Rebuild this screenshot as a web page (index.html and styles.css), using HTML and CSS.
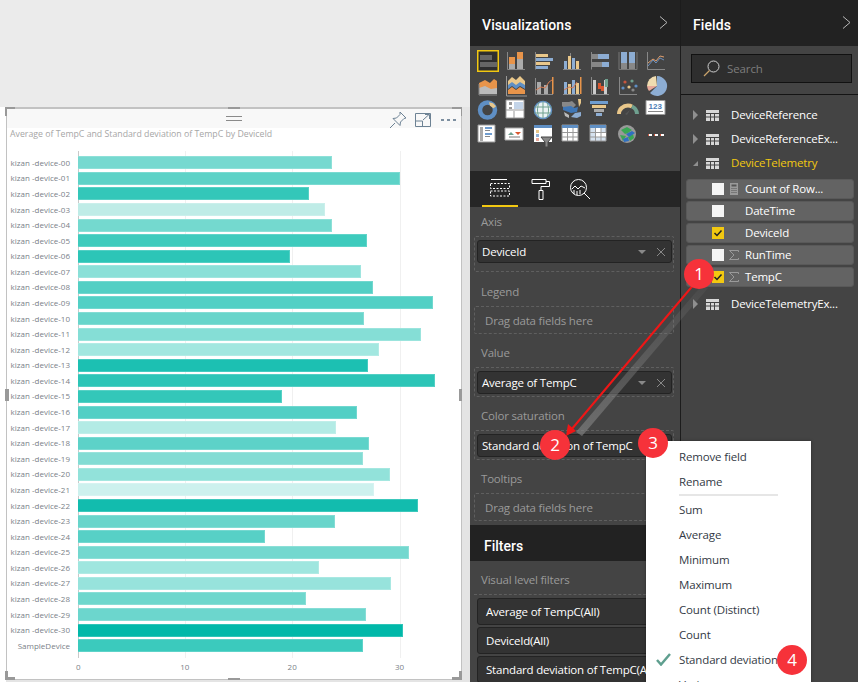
FILE: index.html
```html
<!DOCTYPE html>
<html lang="en">
<head>
<meta charset="utf-8">
<title>Power BI report</title>
<link rel="stylesheet" href="styles.css">
</head>
<body>
<div class="app">
  <main class="canvas">
    <section class="visual">
      <i class="handle h-tl"></i><i class="handle h-tm"></i><i class="handle h-tr"></i>
      <i class="handle h-ml"></i><i class="handle h-mr"></i>
      <i class="handle h-bl"></i><i class="handle h-bm"></i><i class="handle h-br"></i>
      <div class="vhead">
        <svg class="grip" width="16" height="5" viewBox="0 0 16 5"><path d="M0 .5h16M0 4.500h16" stroke="#8a8a8a"/></svg>
        <div class="vtools">
          <svg width="18" height="18" viewBox="0 0 18 18" fill="none" stroke="#6d8294"><path d="M11 1l6 6-2 .5-3.500 3.500-.5 3.500-7-7 3.500-.5L11 3.500zM6 12l-5 5"/></svg>
          <svg width="16" height="14" viewBox="0 0 16 14" fill="none" stroke="#6d8294"><path d="M.5.500h15v13H.5zM.5 8h7v5.500M8 7l6-5.500M10 1.500h4.500V6"/></svg>
          <svg class="dots" width="16" height="2" viewBox="0 0 16 2"><path d="M0 0h3v2H0zM6 0h3v2H6zM12 0h3v2h-3z" fill="#7d8fa0"/></svg>
        </div>
      </div>
      <h2 class="vtitle">Average of TempC and Standard deviation of TempC by DeviceId</h2>
      <div class="plot">
        <i class="gridline g0"></i><i class="gridline g1"></i><i class="gridline g2"></i><i class="gridline g3"></i>
        <div class="row"><span class="cat">kizan -device-00</span><span class="bar" style="width:254px;background:#76d9d0"></span></div>
        <div class="row"><span class="cat">kizan -device-01</span><span class="bar" style="width:322px;background:#5dd2c7"></span></div>
        <div class="row"><span class="cat">kizan -device-02</span><span class="bar" style="width:231px;background:#33c7b9"></span></div>
        <div class="row"><span class="cat">kizan -device-03</span><span class="bar" style="width:247px;background:#bfece7"></span></div>
        <div class="row"><span class="cat">kizan -device-04</span><span class="bar" style="width:254px;background:#74d9cf"></span></div>
        <div class="row"><span class="cat">kizan -device-05</span><span class="bar" style="width:289px;background:#3ecbbd"></span></div>
        <div class="row"><span class="cat">kizan -device-06</span><span class="bar" style="width:212px;background:#2cc5b7"></span></div>
        <div class="row"><span class="cat">kizan -device-07</span><span class="bar" style="width:283px;background:#8ae0d8"></span></div>
        <div class="row"><span class="cat">kizan -device-08</span><span class="bar" style="width:295px;background:#53cfc4"></span></div>
        <div class="row"><span class="cat">kizan -device-09</span><span class="bar" style="width:355px;background:#52d0c5"></span></div>
        <div class="row"><span class="cat">kizan -device-10</span><span class="bar" style="width:286px;background:#68d5cb"></span></div>
        <div class="row"><span class="cat">kizan -device-11</span><span class="bar" style="width:343px;background:#85ded6"></span></div>
        <div class="row"><span class="cat">kizan -device-12</span><span class="bar" style="width:301px;background:#a2e7e0"></span></div>
        <div class="row"><span class="cat">kizan -device-13</span><span class="bar" style="width:290px;background:#1cc0b2"></span></div>
        <div class="row"><span class="cat">kizan -device-14</span><span class="bar" style="width:357px;background:#2cc5b7"></span></div>
        <div class="row"><span class="cat">kizan -device-15</span><span class="bar" style="width:204px;background:#33c7b9"></span></div>
        <div class="row"><span class="cat">kizan -device-16</span><span class="bar" style="width:279px;background:#52cfc5"></span></div>
        <div class="row"><span class="cat">kizan -device-17</span><span class="bar" style="width:258px;background:#b3ebe5"></span></div>
        <div class="row"><span class="cat">kizan -device-18</span><span class="bar" style="width:291px;background:#5dd2c8"></span></div>
        <div class="row"><span class="cat">kizan -device-19</span><span class="bar" style="width:285px;background:#82dcd4"></span></div>
        <div class="row"><span class="cat">kizan -device-20</span><span class="bar" style="width:312px;background:#92e2da"></span></div>
        <div class="row"><span class="cat">kizan -device-21</span><span class="bar" style="width:296px;background:#cdf1ee"></span></div>
        <div class="row"><span class="cat">kizan -device-22</span><span class="bar" style="width:340px;background:#12bcae"></span></div>
        <div class="row"><span class="cat">kizan -device-23</span><span class="bar" style="width:257px;background:#68d5cb"></span></div>
        <div class="row"><span class="cat">kizan -device-24</span><span class="bar" style="width:187px;background:#57d0c6"></span></div>
        <div class="row"><span class="cat">kizan -device-25</span><span class="bar" style="width:331px;background:#73d8cf"></span></div>
        <div class="row"><span class="cat">kizan -device-26</span><span class="bar" style="width:241px;background:#9fe6df"></span></div>
        <div class="row"><span class="cat">kizan -device-27</span><span class="bar" style="width:313px;background:#97e3dc"></span></div>
        <div class="row"><span class="cat">kizan -device-28</span><span class="bar" style="width:228px;background:#6ed7cd"></span></div>
        <div class="row"><span class="cat">kizan -device-29</span><span class="bar" style="width:288px;background:#6cd6cd"></span></div>
        <div class="row"><span class="cat">kizan -device-30</span><span class="bar" style="width:325px;background:#00b8a9"></span></div>
        <div class="row"><span class="cat">SampleDevice</span><span class="bar" style="width:285px;background:#3bcabd"></span></div>
      </div>
      <div class="axis"><span>0</span><span>10</span><span>20</span><span>30</span></div>
    </section>
  </main>

  <aside class="viz">
    <header class="phead"><h1>Visualizations</h1><svg class="chev" width="9" height="13" viewBox="0 0 9 13"><path d="M1 .5l7 6-7 6" fill="none" stroke="#b8b8b8"/></svg></header>
    <div class="gallery">
      <svg class="vi" viewBox="0 0 24 24"><rect x=".75" y=".75" width="20.500" height="20.500" fill="#2e2e2e" stroke="#f2c811" stroke-width="1.500"/><path d="M3 5h12v5H3z" fill="#666"/><path d="M3 12h17v5H3z" fill="#666"/></svg>
      <svg class="vi" viewBox="0 0 24 24"><path d="M2.500 2v17.500H20" fill="none" stroke="#888"/><path d="M4 14h6v5H4zM12 9h6v10h-6z" fill="#aaa"/><path d="M4 7h6v7H4zM12 2h6v7h-6z" fill="#e8944a"/></svg>
      <svg class="vi" viewBox="0 0 24 24"><path d="M2.500 2v17.500" fill="none" stroke="#888"/><path d="M3 4h12v3H3zM3 12h14v3H3z" fill="#e9c78a"/><path d="M3 8h17v3H3zM3 16h12v3H3z" fill="#8dadd3"/></svg>
      <svg class="vi" viewBox="0 0 24 24"><path d="M2 19.500h18" stroke="#888"/><path d="M3 11h3v8H3zM11 8h3v11h-3z" fill="#8dadd3"/><path d="M7 6h3v13H7zM15 11h3v8h-3z" fill="#e9c78a"/><path d="M9 3h1v3H9z" fill="#888"/></svg>
      <svg class="vi" viewBox="0 0 24 24"><path d="M2.500 2v17.500" stroke="#888"/><path d="M3 4h6v5H3zM3 12h10v5H3z" fill="#888"/><path d="M9 4h11v5H9zM13 12h7v5h-7z" fill="#8dadd3"/></svg>
      <svg class="vi" viewBox="0 0 24 24"><path d="M2 2v17.500h18V2" fill="none" stroke="#777"/><path d="M4 2h6v11H4zM12 2h6v11h-6z" fill="#8dadd3"/><path d="M4 13h6v6H4zM12 13h6v6h-6z" fill="#888"/></svg>
      <svg class="vi" viewBox="0 0 24 24"><path d="M2.500 2v17.500H20" fill="none" stroke="#888"/><path d="M3 16l5-6 3 3 4-5 4 2" fill="none" stroke="#6a8fbd"/><path d="M3 13l5-4 3 2 4-5 4 1" fill="none" stroke="#e0a070"/></svg>

      <svg class="vi" viewBox="0 0 24 24"><path d="M2 8l6-3 5 3 4-4 3 2v13H2z" fill="#e8944a"/><path d="M2 13l6-2 6 3 6-1v6H2z" fill="#bbb"/><path d="M2 9v11h18" fill="none" stroke="#888"/></svg>
      <svg class="vi" viewBox="0 0 24 24"><path d="M3 6l4-4 4 3 4-4 5 5v5l-5-3-4 3-4-3-4 3z" fill="#e9c78a"/><path d="M3 10l4-3 4 3 4-3 5 3v4l-5-3-4 3-4-3-4 3z" fill="#5f8fc4"/><path d="M3 15l4-3 4 3 4-3 5 3v4H3z" fill="#e8944a"/><path d="M1.500 1v20H22" fill="none" stroke="#999"/></svg>
      <svg class="vi" viewBox="0 0 24 24"><path d="M2.500 3v16.500H20" fill="none" stroke="#888"/><path d="M4 7h4v12H4zM11 10h4v9h-4z" fill="#aaa"/><path d="M3 15l5-3 4 1 4-6 3-2" fill="none" stroke="#d77b52"/><path d="M19 2h1.500v17H19z" fill="#e8944a"/></svg>
      <svg class="vi" viewBox="0 0 24 24"><path d="M2 19.500h17" stroke="#888"/><path d="M3 7h3v12H3zM11 5h3v14h-3z" fill="#8dadd3"/><path d="M7 9h3v10H7zM15 8h3v11h-3z" fill="#e9c78a"/><path d="M3 15l5-3 4 1 4-6" fill="none" stroke="#d77b52"/><path d="M19 2h1.500v17H19z" fill="#e8944a"/></svg>
      <svg class="vi" viewBox="0 0 24 24"><path d="M2.500 2v17.500H20" fill="none" stroke="#888"/><path d="M4 5h3v14H4zM15 5h3v14h-3z" fill="#ccc"/><path d="M9 8h3v6H9zM12 11h3v5h-3z" fill="#d8572f"/><path d="M16 4h3v8h-3z" fill="#6fa08f"/></svg>
      <svg class="vi" viewBox="0 0 24 24"><path d="M2.500 2v17.500H20" fill="none" stroke="#888"/><circle cx="6" cy="13" r="1.600" fill="#5f8fc4"/><circle cx="8" cy="7" r="1.600" fill="#c8553d"/><circle cx="12" cy="12" r="1.600" fill="#e9c78a"/><circle cx="15" cy="6" r="1.600" fill="#6fa08f"/><circle cx="16" cy="15" r="1.600" fill="#888"/><circle cx="19" cy="11" r="1.600" fill="#5f8fc4"/></svg>
      <svg class="vi" viewBox="0 0 24 24"><path d="M12 11V1a10 10 0 1 1-7 17z" fill="#8dadd3"/><path d="M12 11L4 16a10 10 0 0 1-2-5z" fill="#e8a99a"/><path d="M12 11H2a10 10 0 0 1 9-10z" fill="#f0dcb0"/></svg>

      <svg class="vi" viewBox="0 0 24 24"><circle cx="10.500" cy="11" r="7.500" fill="none" stroke="#5f8fc4" stroke-width="4.500"/><path d="M12 3.300l4 1 3 3-2.500 2-3.500-2.500z" fill="#e9c78a"/></svg>
      <svg class="vi" viewBox="0 0 24 24"><path d="M1 1h18v18H1z" fill="#fff" stroke="#999"/><path d="M4 3h3v3H4zM4 8h3v2H4z" fill="#999"/><path d="M9 3h9v7H9z" fill="#c3d4e8"/><path d="M1 11h18" stroke="#999"/><path d="M9 12v7" stroke="#999"/></svg>
      <svg class="vi" viewBox="0 0 24 24"><circle cx="10" cy="11" r="8.500" fill="#eaf2f4" stroke="#5f8fc4" stroke-width="1.500"/><path d="M1.500 8h17M1.500 14h17M10 2.500v17M6 3.500c-2 5-2 10 0 15M14 3.500c2 5 2 10 0 15" fill="none" stroke="#6fa08f"/></svg>
      <svg class="vi" viewBox="0 0 24 24"><path d="M1 3h7l3-1 4 4-3 3-8 1L1 7z" fill="#888"/><path d="M2 8l8-1 3 2 4-1-1 5-6 1-8-3z" fill="#3f76b5"/><path d="M14 14l6-1 0 4-4 2-6-1z" fill="#8dadd3"/><path d="M3 13l5 3 0 3-4-2z" fill="#bbb"/><path d="M17 0h3v4l-2 4z" fill="#e9c78a"/></svg>
      <svg class="vi" viewBox="0 0 24 24"><path d="M1 2h18v3H1z" fill="#6f9dd0"/><path d="M3 6h14v3H3z" fill="#e9c78a"/><path d="M5 10h10v3H5z" fill="#aaa"/><path d="M7 14h6v3H7z" fill="#8dadd3"/></svg>
      <svg class="vi" viewBox="0 0 24 24"><path d="M2 15a9 8.500 0 0 1 9-8.500" fill="none" stroke="#e9c78a" stroke-width="4"/><path d="M11 6.500a9 8.500 0 0 1 4 1" fill="none" stroke="#e9c78a" stroke-width="4"/><path d="M15 7.500a9 8.500 0 0 1 5 7.500" fill="none" stroke="#6fa08f" stroke-width="4"/><path d="M8 15l5-4-3 5z" fill="#555"/></svg>
      <svg class="vi" viewBox="0 0 24 24"><path d="M1 1.500h19v14H1z" fill="#fff" stroke="#999"/><text x="3.500" y="10" class="vi-num">123</text><path d="M3 12.500h15" stroke="#888"/></svg>

      <svg class="vi" viewBox="0 0 24 24"><path d="M1 1h17v17H1z" fill="#fff" stroke="#999"/><path d="M3 3h3v14H3z" fill="#aaa"/><path d="M8 3h7v2H8zM8 9h7v2H8z" fill="#6f9dd0"/><path d="M8 6h5v1H8zM8 12h5v1H8z" fill="#888"/></svg>
      <svg class="vi" viewBox="0 0 24 24"><path d="M0 4h18v12H0z" fill="#fff" stroke="#aaa"/><path d="M3 11l3-3 3 3z" fill="#6fa08f"/><path d="M10 8h6l-3 3z" fill="#d8572f"/><path d="M4 13h11" stroke="#777"/></svg>
      <svg class="vi" viewBox="0 0 24 24"><path d="M1 1h18v17H1z" fill="#fff"/><path d="M1 1h18v3H1z" fill="#5f8fc4"/><path d="M3 6h3v3H3z" fill="#e9c78a"/><path d="M3 10h3v3H3z" fill="#8dadd3"/><path d="M3 14h3v3H3z" fill="#e8a99a"/><path d="M8 13h11l-4 5v5h-3v-5z" fill="#888" stroke="#444"/></svg>
      <svg class="vi" viewBox="0 0 24 24"><path d="M1 1h16v16H1z" fill="#fff" stroke="#999"/><path d="M1 1h16v3H1z" fill="#5f8fc4"/><path d="M6.500 4v13M12 4v13M1 8.500h16M1 13h16" stroke="#999"/></svg>
      <svg class="vi" viewBox="0 0 24 24"><path d="M1 1h16v16H1z" fill="#d5e2ef" stroke="#999"/><path d="M1 1h16v3H1z" fill="#5f8fc4"/><path d="M7 4h5v4H7zM12 8h5v5h-5zM7 8h5v5H7z" fill="#fff"/><path d="M6.500 4v13M12 4v13M1 8.500h16M1 13h16" stroke="#999"/></svg>
      <svg class="vi" viewBox="0 0 24 24"><circle cx="10" cy="10" r="9" fill="#999"/><path d="M4 6l6-3 5 3-4 3-3 1zM3 11l6 1-3 5zM11 13l5-3 1 4-4 3z" fill="#3aa655"/><path d="M9 10l6-3 3 2-6 4zM6 15l5-2 1 4-5 1z" fill="#2f6fc0"/></svg>
      <svg class="vi" viewBox="0 0 24 24"><path d="M4 10h3v2H4zM10 10h3v2h-3zM16 10h3v2h-3z" fill="#fff"/><path d="M3 10h1v2H3zM9 10h1v2H9zM15 10h1v2h-1z" fill="#c8553d"/></svg>
    </div>
    <nav class="tabs">
      <span class="tab active"><svg width="20" height="18" viewBox="0 0 20 18" fill="none" stroke="#fff"><path d="M1 .5h16"/><path d="M.5 4.500h19v5H.5zM.5 12h19v5H.5z" stroke-dasharray="2 1.500"/></svg></span>
      <span class="tab"><svg width="20" height="21" viewBox="0 0 20 21" fill="none" stroke="#fff"><path d="M1 .500h14v4H1zM15 2.500h3.500v5H10v4"/><path d="M8 11.500h4v9H8z"/></svg></span>
      <span class="tab"><svg width="21" height="21" viewBox="0 0 21 21" fill="none" stroke="#fff"><circle cx="8.500" cy="8.500" r="8"/><path d="M14 14l6 6"/><path d="M2 10l3-3 3 3 3-3 4 2M4 11v4M7 12v4M10 11v4" /></svg></span>
    </nav>
    <div class="wells">
      <div class="w-label w-axis">Axis</div>
      <div class="well well-axis"><div class="pill"><span>DeviceId</span><svg class="pill-tools" width="28" height="10" viewBox="0 0 28 10"><path d="M0 3h8L4 7z" fill="#888"/><path d="M19 1l8 8M27 1l-8 8" stroke="#888" fill="none"/></svg></div></div>
      <div class="w-label w-legend">Legend</div>
      <div class="well well-drop">Drag data fields here</div>
      <div class="w-label w-value">Value</div>
      <div class="well well-pill"><div class="pill"><span>Average of TempC</span><svg class="pill-tools" width="28" height="10" viewBox="0 0 28 10"><path d="M0 3h8L4 7z" fill="#888"/><path d="M19 1l8 8M27 1l-8 8" stroke="#888" fill="none"/></svg></div></div>
      <div class="w-label w-sat">Color saturation</div>
      <div class="well well-pill"><div class="pill"><span>Standard deviation of TempC</span></div></div>
      <div class="w-label w-tips">Tooltips</div>
      <div class="well well-drop well-last">Drag data fields here</div>
    </div>
    <header class="fhead"><h2>Filters</h2></header>
    <div class="filters">
      <div class="w-label">Visual level filters</div>
      <div class="fwell">
        <div class="fpill">Average of TempC(All)</div>
        <div class="fpill">DeviceId(All)</div>
        <div class="fpill">Standard deviation of TempC(All)</div>
      </div>
    </div>
  </aside>

  <aside class="fields">
    <header class="phead"><h1>Fields</h1><svg class="chev" width="9" height="13" viewBox="0 0 9 13"><path d="M1 .5l7 6-7 6" fill="none" stroke="#b8b8b8"/></svg></header>
    <div class="searchbar">
      <div class="search"><svg width="17" height="17" viewBox="0 0 17 17" fill="none"><circle cx="10.500" cy="6.500" r="5.500" stroke="#cfcfcf"/><path d="M6.500 10.500L1 16" stroke="#c9a36b" stroke-width="1.300"/></svg><span>Search</span></div>
    </div>
    <ul class="tree">
      <li class="table"><i class="tri"></i><svg class="tbl" width="13" height="11" viewBox="0 0 13 11"><path d="M0 0h13v11H0z" fill="#d8d8d8"/><path d="M4.500 3v8M8.500 3v8M0 3.500h13M0 7h13" stroke="#444"/></svg><span>DeviceReference</span></li>
      <li class="table"><i class="tri"></i><svg class="tbl" width="13" height="11" viewBox="0 0 13 11"><path d="M0 0h13v11H0z" fill="#d8d8d8"/><path d="M4.500 3v8M8.500 3v8M0 3.500h13M0 7h13" stroke="#444"/></svg><span>DeviceReferenceEx...</span></li>
      <li class="table open"><i class="tri"></i><svg class="tbl" width="13" height="11" viewBox="0 0 13 11"><path d="M0 0h13v11H0z" fill="#d8d8d8"/><path d="M4.500 3v8M8.500 3v8M0 3.500h13M0 7h13" stroke="#444"/></svg><span>DeviceTelemetry</span></li>
      <li class="card"><i class="check"></i><svg class="ficon" width="10" height="12" viewBox="0 0 10 12"><path d="M1 0h8v12H1z" fill="#9a9a9a"/><path d="M2.500 1.500h5v2h-5z" fill="#555"/><path d="M2.500 5h1v1h-1zM4.500 5h1v1h-1zM6.500 5h1v1h-1zM2.500 7h1v1h-1zM4.500 7h1v1h-1zM6.500 7h1v1h-1zM2.500 9h1v1h-1zM4.500 9h1v1h-1zM6.500 9h1v1h-1z" fill="#555"/></svg><span>Count of Row...</span></li>
      <li class="card"><i class="check"></i><span class="noicon"></span><span>DateTime</span></li>
      <li class="card"><i class="check on"><svg width="12" height="12" viewBox="0 0 12 12"><path d="M2.500 6l2.500 2.500 4.500-5" fill="none" stroke="#222" stroke-width="1.500"/></svg></i><span class="noicon"></span><span>DeviceId</span></li>
      <li class="card"><i class="check"></i><svg class="ficon" width="10" height="10" viewBox="0 0 10 10"><path d="M9.500 2V.5H.5L5 5 .5 9.500h9V8" fill="none" stroke="#9a9a9a"/></svg><span>RunTime</span></li>
      <li class="card"><i class="check on"><svg width="12" height="12" viewBox="0 0 12 12"><path d="M2.500 6l2.500 2.500 4.500-5" fill="none" stroke="#222" stroke-width="1.500"/></svg></i><svg class="ficon" width="10" height="10" viewBox="0 0 10 10"><path d="M9.500 2V.5H.5L5 5 .5 9.500h9V8" fill="none" stroke="#9a9a9a"/></svg><span>TempC</span></li>
      <li class="table last"><i class="tri"></i><svg class="tbl" width="13" height="11" viewBox="0 0 13 11"><path d="M0 0h13v11H0z" fill="#d8d8d8"/><path d="M4.500 3v8M8.500 3v8M0 3.500h13M0 7h13" stroke="#444"/></svg><span>DeviceTelemetryEx...</span></li>
    </ul>
  </aside>

  <div class="menu">
    <div class="mi">Remove field</div>
    <div class="mi">Rename</div>
    <hr class="msep">
    <div class="mi">Sum</div>
    <div class="mi">Average</div>
    <div class="mi">Minimum</div>
    <div class="mi">Maximum</div>
    <div class="mi">Count (Distinct)</div>
    <div class="mi">Count</div>
    <div class="mi checked"><svg width="15" height="13" viewBox="0 0 15 13"><path d="M1 7l4 4.500L14 1" fill="none" stroke="#5f9f8f" stroke-width="2.500"/></svg>Standard deviation</div>
    <div class="mi">Variance</div>
  </div>

  <svg class="arrow" width="858" height="682" viewBox="0 0 858 682">
    <defs>
      <linearGradient id="shade" x1="0" y1="0" x2="0" y2="1"><stop offset="0" stop-color="#8a8a8a" stop-opacity=".08"/><stop offset="1" stop-color="#8a8a8a" stop-opacity=".6"/></linearGradient>
    </defs>
    <path d="M703 284l5 4L582 436l-6-4z" fill="url(#shade)"/>
    <path d="M695 283L571 430" stroke="#f01616" stroke-width="2" fill="none"/>
    <path d="M566 436l2-12 8 7z" fill="#f01616"/>
  </svg>
  <b class="badge b1">1</b>
  <b class="badge b2">2</b>
  <b class="badge b3">3</b>
  <b class="badge b4">4</b>
</div>
</body>
</html>
```

FILE: styles.css
```css
* { box-sizing: border-box; }
html, body { margin: 0; padding: 0; }
body { width: 858px; height: 682px; overflow: hidden; background: #fff; font-family: "Open Sans", "Noto Sans", sans-serif; }
h1, h2 { margin: 0; }
i { display: block; font-style: normal; }

.app { position: relative; display: grid; grid-template-columns: 470px 210px 178px; width: 858px; height: 682px; overflow: hidden; }

/* report canvas */
.canvas { height: 682px; padding: 107px 8px 0 6px; background: linear-gradient(#ebebeb 0 107px, transparent 107px), linear-gradient(90deg, #fff 0 6px, #e4e4e4 6px); }
.visual { position: relative; width: 456px; height: 573px; background: #fff; border: 1px solid #c2c2c2; border-width: 2px 1px 1px 1px; }
.handle { position: absolute; background: #999; }
.h-tl, .h-tr, .h-bl, .h-br { width: 10px; height: 3px; }
.h-tl::after, .h-bl::after, .h-tr::after, .h-br::after { content: ""; position: absolute; width: 3px; height: 9px; background: #999; }
.h-tl { left: -2px; top: -2px; }
.h-tl::after { left: 0; top: 0; }
.h-tm { left: 221px; top: -2px; width: 12px; height: 3px; }
.h-tr { right: -1px; top: -2px; }
.h-tr::after { right: 0; top: 0; }
.h-ml { left: -2px; top: 280px; width: 4px; height: 12px; }
.h-mr { right: -1px; top: 280px; width: 3px; height: 12px; }
.h-bl { left: -2px; bottom: -1px; }
.h-bl::after { left: 0; bottom: 0; }
.h-bm { left: 221px; bottom: -1px; width: 12px; height: 2px; }
.h-br { right: -1px; bottom: -1px; }
.h-br::after { right: 0; bottom: 0; }
.vhead { position: relative; display: flex; justify-content: flex-end; align-items: center; height: 19px; background: #f8f8f8; padding-right: 4px; }
.grip { position: absolute; left: 219px; top: 7px; }
.vtools { display: flex; align-items: center; gap: 8px; padding-top: 2px; }
.vtools .dots { margin-left: 2px; }
.vtitle { margin: 0; padding: 0 0 0 3px; height: 23px; font: 400 8.750px/13px "Open Sans", sans-serif; color: #a6a6a6; white-space: nowrap; }

.plot { position: relative; height: 507px; padding-top: 4px; display: flex; flex-direction: column; }
.gridline { position: absolute; top: 0; bottom: 0; width: 1px; background: #f0f0f0; }
.g0 { left: 71px; background: #c9c9c9; }
.g1 { left: 178px; }
.g2 { left: 285px; }
.g3 { left: 393px; }
.row { position: relative; display: flex; align-items: center; height: 15.580px; flex: none; }
.cat { width: 71px; padding-right: 8px; text-align: right; font: 400 8px/12px "Open Sans", sans-serif; color: #7a7f88; white-space: nowrap; }
.bar { height: 13px; border: 1px solid rgba(255,255,255,.18); border-left: 0; }

.axis { display: flex; padding-left: 71px; font: 400 8px/12px "Open Sans", sans-serif; color: #7a7f88; padding-top: 3px; }
.axis span { flex: none; width: 107.300px; text-indent: -2px; }
.axis span + span { text-indent: -5px; }
.axis span:last-child { width: 40px; }

/* panels */
.viz { background: #444; height: 682px; overflow: hidden; }
.fields { background: #444; border-left: 1px solid #1c1c1c; height: 682px; overflow: hidden; }
.phead { display: flex; justify-content: space-between; align-items: center; height: 46px; padding: 3px 12px 0 12px; background: #222; }
.phead h1 { font: 500 14px/20px Roboto, sans-serif; color: #fff; letter-spacing: .1px; }
.phead .chev { margin-top: -5px; }
.fields .phead { padding-left: 12px; padding-right: 7px; }

.gallery { display: grid; grid-template-columns: repeat(7, 24px); column-gap: 4px; grid-auto-rows: 24.700px; height: 125px; padding: 4px 0 0 7px; align-content: start; }
.vi { display: block; width: 24px; height: 24px; overflow: visible; }
.vi-num { font: 700 8px "Liberation Sans", sans-serif; fill: #4a7cb5; }

.tabs { display: flex; height: 36px; background: #262626; padding-left: 12px; }
.tab { width: 36px; height: 36px; margin-right: 5px; display: flex; justify-content: center; padding-top: 8px; }
.tab + .tab { margin-right: 3px; }
.tab.active { border-bottom: 2px solid #f2c811; }

.wells { padding: 7px 6px 0 4px; height: 318px; font-size: 11.500px; letter-spacing: -.2px; }
.w-label { height: 16px; font: 400 11.500px/16px "Open Sans", sans-serif; letter-spacing: -.2px; color: #9a9a9a; padding-left: 7px; margin-bottom: 6px; }
.w-legend { margin-top: 12px; }
.w-value { margin-top: 11px; }
.w-sat { margin-top: 11px; }
.w-tips { margin-top: 11px; }
.well { border: 1px dashed #5f5f5f; border-radius: 2px; padding: 3px 1px 3px 2px; }
.well-axis { height: 36px; }
.well-pill { height: 30px; }
.well-drop { height: 28px; padding: 0 0 0 10px; font: 400 11.500px/28px "Open Sans", sans-serif; letter-spacing: -.2px; color: #9a9a9a; }
.pill { display: flex; justify-content: space-between; align-items: center; height: 23px; padding: 0 5px 0 4px; background: #333; border: 1px solid #232323; border-radius: 3px; font: 400 11.500px/20px "Open Sans", sans-serif; letter-spacing: -.2px; color: #fff; white-space: nowrap; }
.pill-tools { flex: none; }

.fhead { display: flex; align-items: center; height: 36px; padding: 6px 0 0 14px; background: #222; }
.fhead h2 { font: 500 14px/20px Roboto, sans-serif; color: #fff; }
.filters { padding: 11px 4px 0; }
.fwell { border-top: 1px dashed #5f5f5f; padding: 3px 0 0 3px; display: flex; flex-direction: column; gap: 2px; }
.fpill { height: 27px; padding-left: 8px; background: #333; border: 1px solid #232323; border-radius: 3px; font: 400 11.500px/26px "Open Sans", sans-serif; letter-spacing: -.2px; color: #fff; white-space: nowrap; overflow: hidden; }

/* fields */
.searchbar { height: 49px; padding: 8px 6px 0 10px; border-bottom: 1px solid #141414; }
.search { display: flex; align-items: center; gap: 7px; height: 29px; padding-left: 11px; background: #2e2e2e; border: 1px solid #111; }
.search span { font: 400 11.500px/16px "Open Sans", sans-serif; letter-spacing: -.1px; color: #7d7d7d; }
.tree { list-style: none; margin: 0; padding: 8px 4px 0 5px; }
.table { display: flex; align-items: center; height: 24px; padding-left: 7px; font: 400 11.500px/16px "Open Sans", sans-serif; letter-spacing: -.2px; color: #fff; white-space: nowrap; }
.table .tbl { margin-left: 8px; margin-right: 12px; flex: none; }
.tri { width: 0; height: 0; border-left: 5px solid #8f8f8f; border-top: 5px solid transparent; border-bottom: 5px solid transparent; flex: none; }
.open { color: #f2c811; margin-bottom: 4px; }
.open .tri { border-left: 5px solid transparent; border-top: 0; border-bottom: 5px solid #8f8f8f; border-right: 0; }
.card { display: flex; align-items: center; height: 20px; margin-bottom: 2px; padding-left: 25px; background: #636363; border: 1px solid #595959; border-radius: 3px; font: 400 11.500px/16px "Open Sans", sans-serif; letter-spacing: -.2px; color: #fff; white-space: nowrap; }
.check { width: 12px; height: 12px; margin-right: 5px; background: #f4f4f4; flex: none; }
.check.on { background: #f2c811; }
.check svg { display: block; }
.ficon { flex: none; width: 10px; margin-right: 6px; }
.noicon { flex: none; width: 16px; }
.last { margin-top: 5px; }

/* context menu */
.menu { position: absolute; left: 646px; top: 441px; width: 165px; height: 260px; padding: 3px 0 0 33px; background: #fff; box-shadow: 0 0 3px rgba(0,0,0,.35); font: 400 11.500px/25px "Open Sans", sans-serif; letter-spacing: -.15px; color: #333a45; }
.mi { position: relative; height: 25px; white-space: nowrap; }
.msep { margin: 0 0 1px; width: 99px; height: 2px; border: 0; background: #e6e6e6; }
.checked svg { position: absolute; left: -23px; top: 6px; }

.arrow { position: absolute; left: 0; top: 0; pointer-events: none; }
.badge { position: absolute; display: flex; align-items: center; justify-content: center; width: 30px; height: 30px; border-radius: 50%; background: #f6323a; color: #fff; font: 400 17px/30px "Open Sans", sans-serif; }
.b1 { left: 684px; top: 259px; }
.b2 { left: 540px; top: 430px; }
.b3 { left: 638px; top: 428px; }
.b4 { left: 777px; top: 645px; }
```
